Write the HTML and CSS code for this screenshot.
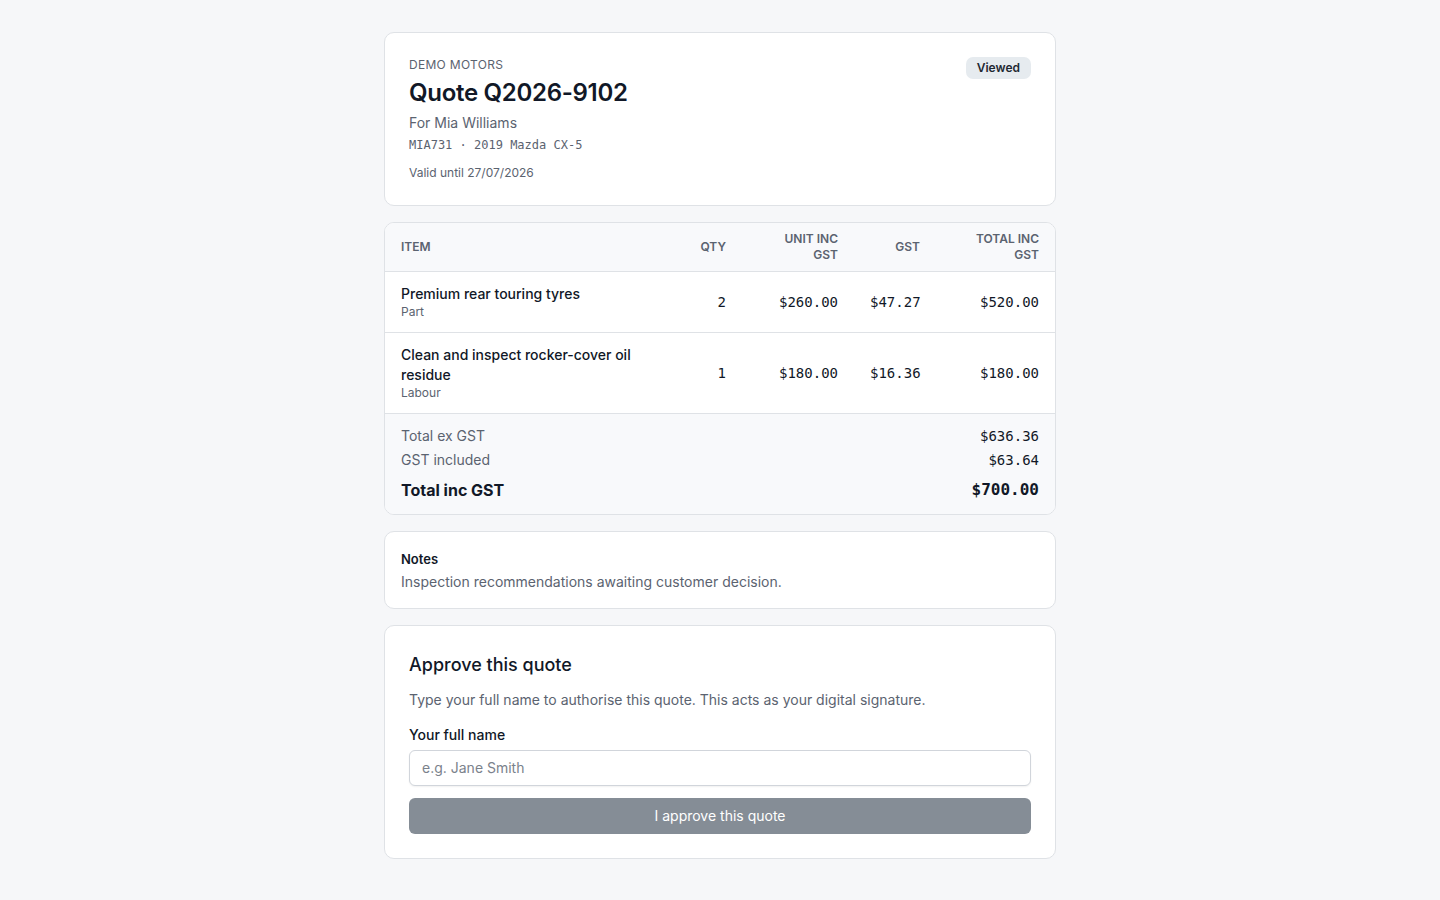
FILE: index.html
```html
<!DOCTYPE html>
<html lang="en">
<head>
    <meta charset="UTF-8">
    <meta name="viewport" content="width=device-width, initial-scale=1.0">
    <title>Quote Q2026-9102</title>
    <link rel="stylesheet" href="styles.css">
</head>
<body>

<main class="page">
    <section class="card header-card">
        <div class="header-info">
            <div class="shop">DEMO MOTORS</div>
            <h1>Quote Q2026-9102</h1>
            <div class="customer">For Mia Williams</div>
            <div class="vehicle">MIA731 · 2019 Mazda CX-5</div>
            <div class="valid">Valid until 27/07/2026</div>
        </div>
        <span class="badge">Viewed</span>
    </section>

    <section class="card items-card">
        <table class="items">
            <thead>
                <tr>
                    <th class="col-item">Item</th>
                    <th class="col-qty">Qty</th>
                    <th class="col-unit">Unit inc GST</th>
                    <th class="col-gst">GST</th>
                    <th class="col-total">Total inc GST</th>
                </tr>
            </thead>
            <tbody>
                <tr>
                    <td class="col-item">
                        <div class="item-name">Premium rear touring tyres</div>
                        <div class="item-type">Part</div>
                    </td>
                    <td class="num">2</td>
                    <td class="num">$260.00</td>
                    <td class="num">$47.27</td>
                    <td class="num">$520.00</td>
                </tr>
                <tr>
                    <td class="col-item">
                        <div class="item-name">Clean and inspect rocker-cover oil residue</div>
                        <div class="item-type">Labour</div>
                    </td>
                    <td class="num">1</td>
                    <td class="num">$180.00</td>
                    <td class="num">$16.36</td>
                    <td class="num">$180.00</td>
                </tr>
            </tbody>
        </table>
        <div class="totals">
            <div class="total-row">
                <span>Total ex GST</span>
                <span class="mono">$636.36</span>
            </div>
            <div class="total-row">
                <span>GST included</span>
                <span class="mono">$63.64</span>
            </div>
            <div class="total-row grand">
                <span>Total inc GST</span>
                <span class="mono">$700.00</span>
            </div>
        </div>
    </section>

    <section class="card notes-card">
        <h2>Notes</h2>
        <p>Inspection recommendations awaiting customer decision.</p>
    </section>

    <section class="card approve-card">
        <h2>Approve this quote</h2>
        <p>Type your full name to authorise this quote. This acts as your digital signature.</p>
        <label for="fullname">Your full name</label>
        <input type="text" id="fullname" placeholder="e.g. Jane Smith">
        <button disabled>I approve this quote</button>
    </section>
</main>

</body>
</html>
```

FILE: styles.css
```css
/* Global Styles */
* {
    margin: 0;
    padding: 0;
    box-sizing: border-box;
}

body {
    font-family: 'Inter', 'Noto Sans', sans-serif;
    background-color: #f6f7f9;
    color: #111827;
}

.page {
    width: 672px;
    margin: 0 auto;
    padding: 32px 0;
    display: flex;
    flex-direction: column;
    gap: 16px;
}

.card {
    background: white;
    border: 1px solid #dfe2e6;
    border-radius: 10px;
}

.mono, .num, .vehicle {
    font-family: 'DejaVu Sans Mono', 'Liberation Mono', monospace;
}

/* Header */
.header-card {
    display: flex;
    justify-content: space-between;
    align-items: flex-start;
    padding: 24px 24px 24px;
}

.shop {
    font-size: 12px;
    color: #5b6370;
    letter-spacing: 0.3px;
    line-height: 16px;
}

h1 {
    font-size: 24px;
    font-weight: 600;
    letter-spacing: -0.3px;
    line-height: 32px;
    margin-top: 4px;
}

.customer {
    font-size: 14px;
    color: #5b6370;
    margin-top: 4px;
    line-height: 20px;
}

.vehicle {
    font-size: 12px;
    color: #5b6370;
    margin-top: 4px;
    line-height: 16px;
}

.valid {
    font-size: 12px;
    color: #5b6370;
    margin-top: 12px;
    line-height: 16px;
}

.badge {
    background: #e6ebef;
    color: #1f2933;
    font-size: 12px;
    font-weight: 600;
    line-height: 16px;
    padding: 3px 11px;
    border-radius: 7px;
}

/* Items table */
.items-card {
    overflow: hidden;
}

.items {
    width: 100%;
    border-collapse: collapse;
    table-layout: fixed;
}

.items th {
    background: #f8f9fb;
    font-size: 12px;
    font-weight: 600;
    color: #5b6370;
    text-transform: uppercase;
    text-align: right;
    padding: 7px 16px;
    line-height: 16px;
    height: 48px;
    border-bottom: 1px solid #dfe2e6;
}

.items th.col-item {
    text-align: left;
}

.col-qty { width: 80px; }
.col-unit { width: 112px; }
.col-gst { width: 82px; }
.col-total { width: 119px; }

.items td {
    padding: 12px 16px;
    font-size: 14px;
    vertical-align: middle;
    border-bottom: 1px solid #dfe2e6;
}

.items td.num {
    text-align: right;
    font-size: 14px;
}

.item-name {
    font-weight: 500;
    line-height: 20px;
}

.item-type {
    font-size: 12px;
    color: #5b6370;
    line-height: 16px;
}

.totals {
    background: #f8f9fb;
    padding: 10px 16px 12px;
}

.total-row {
    display: flex;
    justify-content: space-between;
    align-items: center;
    font-size: 14px;
    color: #5b6370;
    line-height: 24px;
}

.total-row .mono {
    color: #111827;
}

.total-row.grand {
    font-size: 16px;
    font-weight: 700;
    color: #111827;
    margin-top: 6px;
}

/* Notes */
.notes-card {
    padding: 17px 16px 16px;
}

.notes-card h2 {
    font-size: 13px;
    font-weight: 600;
    line-height: 20px;
}

.notes-card p {
    font-size: 14px;
    color: #5b6370;
    line-height: 20px;
    margin-top: 3px;
}

/* Approve */
.approve-card {
    padding: 27px 24px 24px;
}

.approve-card h2 {
    font-size: 18px;
    font-weight: 500;
    line-height: 24px;
}

.approve-card p {
    font-size: 14px;
    color: #5b6370;
    line-height: 20px;
    margin-top: 13px;
}

.approve-card label {
    display: block;
    font-size: 14px;
    font-weight: 500;
    line-height: 20px;
    margin-top: 15px;
}

.approve-card input {
    display: block;
    width: 100%;
    height: 36px;
    margin-top: 5px;
    padding: 0 12px;
    border: 1px solid #d1d5db;
    border-radius: 6px;
    font-family: inherit;
    font-size: 14px;
    box-shadow: 0 1px 2px rgba(0, 0, 0, 0.06);
}

.approve-card input::placeholder {
    color: #7b828c;
}

.approve-card button {
    display: block;
    width: 100%;
    height: 36px;
    margin-top: 12px;
    background: #858d96;
    color: white;
    border: none;
    border-radius: 6px;
    font-family: inherit;
    font-size: 14px;
    font-weight: 400;
}
```
